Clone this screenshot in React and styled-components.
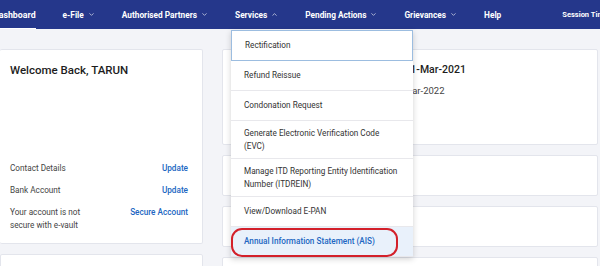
import styled, { createGlobalStyle } from "styled-components";
import { ChevronDown, ChevronUp } from "lucide-react";

const GlobalStyle = createGlobalStyle`
    body {
        margin: 0;
        background: #f3f4f8;
        font-family: Roboto, "Noto Sans", "Liberation Sans", sans-serif;
        overflow: hidden;
    }
`

const navItems = [
    { label: "Dashboard", active: true },
    { label: "e-File", chevron: "down" },
    { label: "Authorised Partners", chevron: "down" },
    { label: "Services", chevron: "up" },
    { label: "Pending Actions", chevron: "down" },
    { label: "Grievances", chevron: "down" },
    { label: "Help" },
]

const services = [
    "Rectification",
    "Refund Reissue",
    "Condonation Request",
    "Generate Electronic Verification Code (EVC)",
    "Manage ITD Reporting Entity Identification Number (ITDREIN)",
    "View/Download E-PAN",
    "Annual Information Statement (AIS)",
]

function App() {
    return (
        <>
        <GlobalStyle />
        <Screen>
            <Nav>
                {navItems.map((item) => (
                    <NavItem key={item.label} $active={item.active}>
                        {item.label}
                        {item.chevron === "down" && <ChevronDown size={7} strokeWidth={2.5} />}
                        {item.chevron === "up" && <ChevronUp size={7} strokeWidth={2.5} />}
                    </NavItem>
                ))}
                <Session>Session Time</Session>
            </Nav>
            <Page>
                <Column>
                    <WelcomeCard>
                        <h3>Welcome Back, TARUN</h3>
                        <Rows>
                            <Row>
                                <span>Contact Details</span>
                                <LinkText>Update</LinkText>
                            </Row>
                            <Row>
                                <span>Bank Account</span>
                                <LinkText>Update</LinkText>
                            </Row>
                            <Row>
                                <span className="wrap">Your account is not secure with e-vault</span>
                                <LinkText>Secure Account</LinkText>
                            </Row>
                        </Rows>
                    </WelcomeCard>
                    <Card $height={40} />
                </Column>
                <Column>
                    <InfoCard>
                        <strong>ITR-1 for AY 2020-21 was e-filed on 31-Mar-2021</strong>
                        <span>Return processed &amp; refund issued on 31-Mar-2022</span>
                    </InfoCard>
                    <Card $height={41} />
                    <Card $height={41} />
                    <Card $height={41} />
                </Column>
            </Page>
            <Dropdown>
                {services.map((s, i) => (
                    <MenuItem key={s} $focused={i === 0} $selected={i === services.length - 1}>
                        {s}
                    </MenuItem>
                ))}
                <Highlight />
            </Dropdown>
        </Screen>
        </>
    )
}

const Screen = styled.div`
    position: relative;
    width: 600px;
    height: 266px;
    overflow: hidden;
`

const Nav = styled.nav`
    display: flex;
    align-items: center;
    gap: 27px;
    height: 29px;
    margin-left: -7px;
    background: #25378b;
    color: #fff;
    white-space: nowrap;
`

const NavItem = styled.div`
    display: flex;
    align-items: center;
    gap: 4px;
    height: 100%;
    font-size: ${(p) => (p.$active ? 8.8 : 8.3)}px;
    font-weight: 700;
    box-sizing: border-box;
    border-bottom: 1px solid ${(p) => (p.$active ? "#ffffff" : "transparent")};
    padding-top: 1px;

    svg {
        opacity: 0.85;
    }
`

const Session = styled.div`
    font-size: 7.5px;
    font-weight: 700;
    margin-left: 34px;
`

const Page = styled.div`
    display: grid;
    grid-template-columns: 203px 376px;
    gap: 19px;
    padding-top: 20px;
`

const Column = styled.div`
    display: flex;
    flex-direction: column;
    gap: 10px;
`

const Card = styled.div`
    background: #fff;
    border: 1px solid #e3e5ec;
    border-radius: 2px;
    height: ${(p) => p.$height}px;
    box-sizing: border-box;
`

const WelcomeCard = styled(Card)`
    height: 195px;
    border-left: none;
    display: flex;
    flex-direction: column;
    padding: 13px 14px 11px 10px;

    h3 {
        margin: 0;
        font-size: 11.5px;
        font-weight: 500;
        color: #1d1d1d;
    }
`

const Rows = styled.div`
    margin-top: auto;
    display: flex;
    flex-direction: column;
    gap: 9px;
`

const Row = styled.div`
    display: flex;
    justify-content: space-between;
    align-items: flex-start;
    font-size: 8.2px;
    line-height: 13px;
    color: #444;

    .wrap {
        width: 80px;
    }
`

const LinkText = styled.span`
    color: #2166c2;
    font-weight: 500;
`

const InfoCard = styled(Card)`
    height: 96px;
    display: flex;
    flex-direction: column;
    gap: 9px;
    padding: 13px 10px 13px 12px;
    white-space: nowrap;

    strong {
        font-size: 10.5px;
        font-weight: 500;
        color: #1d1d1d;
    }

    span {
        font-size: 9.5px;
        color: #444;
        margin-left: -2px;
    }
`

const Dropdown = styled.div`
    position: absolute;
    left: 231px;
    top: 30px;
    width: 182px;
    background: #fff;
    box-shadow: 0 2px 6px rgba(0, 0, 0, 0.18);
`

const MenuItem = styled.div`
    display: flex;
    align-items: center;
    box-sizing: border-box;
    padding: 6px 13px;
    font-size: 8.2px;
    line-height: 12.5px;
    color: ${(p) => (p.$selected ? "#2166c2" : "#333")};
    font-weight: ${(p) => (p.$selected ? 500 : 400)};
    background: ${(p) => (p.$selected ? "#e9f1fb" : "#fff")};
    border: ${(p) => (p.$focused ? "1.5px solid #9cbde0" : "none")};
    border-bottom: ${(p) => (p.$focused ? "1.5px solid #9cbde0" : "1px solid #e8e8ec")};
    min-height: ${(p) => (p.$focused ? 31 : 30)}px;
`

const Highlight = styled.div`
    position: absolute;
    left: 0;
    bottom: 0;
    width: 167px;
    height: 29px;
    box-sizing: border-box;
    border: 2px solid #d3202a;
    border-radius: 11px;
    pointer-events: none;
`

export default App;
